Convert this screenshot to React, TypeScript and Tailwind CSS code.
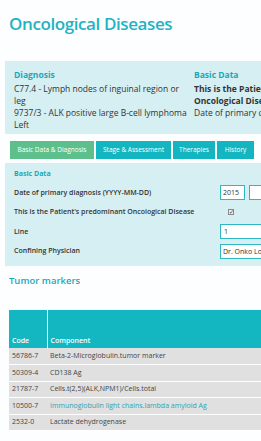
const markers = [
  { code: "56786-7", name: "Beta-2-Microglobulin.tumor marker" },
  { code: "50309-4", name: "CD138 Ag" },
  { code: "21787-7", name: "Cells.t(2,5)(ALK,NPM1)/Cells.total" },
  { code: "10500-7", name: "Immunoglobulin light chains.lambda amyloid Ag", link: true },
  { code: "2532-0", name: "Lactate dehydrogenase" },
];

const tabs = [
  { label: "Basic Data & Diagnosis", w: "w-[84px]", active: true },
  { label: "Stage & Assessment", w: "w-[75px]" },
  { label: "Therapies", w: "w-[42px]" },
  { label: "History", w: "w-[37px]" },
];

export default function App() {
  return (
    <div className="w-[261px] h-[441px] overflow-hidden bg-[#fdfeff] font-['Open_Sans',sans-serif] text-[#333]">
      <h1 className="pl-[9px] pt-[13px] text-[17px] leading-[22px] font-semibold text-[#1fb3c3] tracking-[-0.4px]">
        Oncological Diseases
      </h1>

      <div className="ml-[5px] mt-[26px] h-[73px] bg-[#d6eff3] flex pl-[9px] pt-[8px] w-[400px]">
        <div className="w-[180px] text-[8.5px] leading-[12px]">
          <div className="font-bold text-[#1ba8b8] mb-[2px]">Diagnosis</div>
          <div>C77.4 - Lymph nodes of inguinal region or</div>
          <div>leg</div>
          <div>9737/3 - ALK positive large B-cell lymphoma</div>
          <div>Left</div>
        </div>
        <div className="text-[8.5px] leading-[12px] whitespace-nowrap">
          <div className="font-bold text-[#1ba8b8] mb-[2px]">Basic Data</div>
          <div className="font-bold">This is the Patient's predominant</div>
          <div className="font-bold">Oncological Disease</div>
          <div>Date of primary diagnosis</div>
        </div>
      </div>

      <div className="flex gap-[2px] pl-[10px] mt-[7px]">
        {tabs.map((t) => (
          <div
            key={t.label}
            className={`${t.w} h-[18px] flex items-center justify-center text-[6.5px] text-white ${
              t.active ? "bg-[#5cbf8c]" : "bg-[#12b5c0]"
            }`}
          >
            {t.label}
          </div>
        ))}
      </div>

      <div className="ml-[5px] mt-[4px] h-[103px] w-[300px] bg-[#d6eff3] pl-[9px] pt-[5px] text-[7px]">
        <div className="font-bold text-[#1ba8b8] leading-[12px]">Basic Data</div>
        <div className="flex items-center h-[19.5px] mt-[3px]">
          <span className="w-[206px] font-semibold">Date of primary diagnosis (YYYY-MM-DD)</span>
          <span className="w-[25px] h-[15px] border border-[#2fb8c4] bg-white pl-[2px] leading-[13px]">2015</span>
          <span className="ml-[4px] w-[20px] h-[15px] border border-[#2fb8c4] bg-white"></span>
        </div>
        <div className="flex items-center h-[19.5px]">
          <span className="w-[214px] font-semibold">This is the Patient's predominant Oncological Disease</span>
          <span className="w-[6px] h-[6px] border border-[#888] bg-[#eee] text-[6px] leading-[5px] flex items-center justify-center">✓</span>
        </div>
        <div className="flex items-center h-[19.5px]">
          <span className="w-[206px] font-semibold">Line</span>
          <span className="w-[60px] h-[15px] border border-[#2fb8c4] bg-white pl-[3px] leading-[13px]">1</span>
        </div>
        <div className="flex items-center h-[19.5px]">
          <span className="w-[206px] font-semibold">Confining Physician</span>
          <span className="w-[60px] h-[15px] border border-[#2fb8c4] bg-white pl-[2px] leading-[13px] whitespace-nowrap">Dr. Onko Logist</span>
        </div>
      </div>

      <h2 className="pl-[9px] mt-[9px] text-[9.5px] leading-[12px] font-semibold text-[#1ba8b8]">Tumor markers</h2>

      <table className="ml-[9px] mt-[23px] w-[252px] border-collapse text-[7px]">
        <thead>
          <tr className="bg-[#12b7c2] text-white h-[38px]">
            <th className="w-[38px] border-r border-white text-left align-bottom pl-[3px] pb-[2px] font-semibold">Code</th>
            <th className="text-left align-bottom pl-[3px] pb-[2px] font-semibold">Component</th>
          </tr>
        </thead>
        <tbody>
          {markers.map((m) => (
            <tr key={m.code} className="bg-[#e0e0e0] h-[16.5px] border-b border-white">
              <td className="pl-[3px] text-[#444]">{m.code}</td>
              <td className={`pl-[3px] ${m.link ? "text-[#2aa5b5]" : "text-[#444]"}`}>{m.name}</td>
            </tr>
          ))}
        </tbody>
      </table>
    </div>
  );
}
